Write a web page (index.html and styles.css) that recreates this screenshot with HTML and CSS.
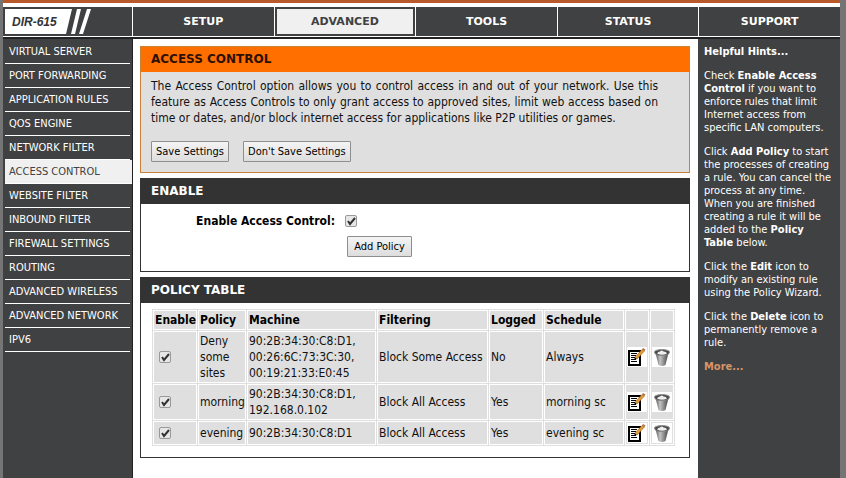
FILE: index.html
```html
<!DOCTYPE html>
<html lang="en">
<head>
    <meta charset="UTF-8">
    <meta name="viewport" content="width=device-width, initial-scale=1.0">
    <title>DIR-615 - Access Control</title>
    <link rel="stylesheet" href="styles.css">
</head>
<body>
    <svg class="sprite" aria-hidden="true">
        <defs>
            <linearGradient id="metal" x1="0" x2="1">
                <stop offset="0" stop-color="#555"/>
                <stop offset=".35" stop-color="#c4c4c4"/>
                <stop offset="1" stop-color="#444"/>
            </linearGradient>
        </defs>
        <symbol id="icon-edit" viewBox="0 0 20 20">
            <rect width="20" height="20" fill="#fff"/>
            <path d="M1 3h13v16H1z" fill="#000"/>
            <path d="M3 5h9v12H3z" fill="#fff"/>
            <path d="M4 6.500h6M4 8.500h5M4 10.500h4M4 12.500h5M4 14.500h6" stroke="#000"/>
            <path d="M7 13l1-3 2 2z" fill="#000"/>
            <path d="M8 10L15 2.500l2.500 1.500-7.500 8z" fill="#e09a3a" stroke="#a5651a" stroke-width=".6"/>
            <path d="M15 2.500l1-1.500 2.500 1.500-1 1.500z" fill="#b5714a"/>
        </symbol>
        <symbol id="icon-delete" viewBox="0 0 20 20">
            <rect width="20" height="20" fill="#fff"/>
            <path d="M3.500 6l3 12q3.500 2 7 0l3-12z" fill="url(#metal)"/>
            <path d="M2.500 5q0-2 7.500-2.500 7.500.500 7.500 2.500 0 3.500-7.500 3.500T2.500 5z" fill="#4a4a4a" stroke="#8a8a8a"/>
            <path d="M5 6.500q1-2 3-2 2-2 3.500 0 3 0 3.500 2-5 2.500-10 0z" fill="#eee"/>
        </symbol>
    </svg>

    <div class="page">
        <div class="banner"></div>

        <div class="topnav">
            <div class="model">
                <svg viewBox="0 0 90 26" width="90" height="26" aria-hidden="true">
                    <path d="M0 0h67l-6 25H0z" fill="#fff"/>
                    <path d="M72 0h4l-6 25h-4zM82 0h4l-8 25h-4z" fill="#fff"/>
                </svg>
                <span>DIR-615</span>
            </div>
            <a href="#">SETUP</a>
            <a href="#" class="active">ADVANCED</a>
            <a href="#">TOOLS</a>
            <a href="#">STATUS</a>
            <a href="#">SUPPORT</a>
        </div>

        <div class="columns">
            <div class="sidenav">
                <a href="#">VIRTUAL SERVER</a>
                <a href="#">PORT FORWARDING</a>
                <a href="#">APPLICATION RULES</a>
                <a href="#">QOS ENGINE</a>
                <a href="#">NETWORK FILTER</a>
                <a href="#" class="active">ACCESS CONTROL</a>
                <a href="#">WEBSITE FILTER</a>
                <a href="#">INBOUND FILTER</a>
                <a href="#">FIREWALL SETTINGS</a>
                <a href="#">ROUTING</a>
                <a href="#">ADVANCED WIRELESS</a>
                <a href="#">ADVANCED NETWORK</a>
                <a href="#">IPV6</a>
            </div>

            <div class="main">
                <div class="box box-intro">
                    <h1>ACCESS CONTROL</h1>
                    <p>The Access Control option allows you to control access in and out of your network. Use this feature as Access Controls to only grant access to approved sites, limit web access based on time or dates, and/or block internet access for applications like P2P utilities or games.</p>
                    <div class="buttons">
                        <button type="button">Save Settings</button>
                        <button type="button">Don't Save Settings</button>
                    </div>
                </div>

                <div class="box box-enable">
                    <h2>ENABLE</h2>
                    <div class="form-row">
                        <label for="enable">Enable Access Control:</label>
                        <input type="checkbox" id="enable" checked>
                    </div>
                    <div class="form-row">
                        <button type="button">Add Policy</button>
                    </div>
                </div>

                <div class="box box-policy">
                    <h2>POLICY TABLE</h2>
                    <table>
                        <colgroup>
                            <col class="c-enable"><col class="c-policy"><col class="c-machine"><col class="c-filter">
                            <col class="c-logged"><col class="c-schedule"><col class="c-icon"><col class="c-icon">
                        </colgroup>
                        <tr>
                            <th>Enable</th>
                            <th>Policy</th>
                            <th>Machine</th>
                            <th>Filtering</th>
                            <th>Logged</th>
                            <th>Schedule</th>
                            <th></th>
                            <th></th>
                        </tr>
                        <tr>
                            <td><input type="checkbox" aria-label="Enable Deny some sites" checked></td>
                            <td>Deny some sites</td>
                            <td>90:2B:34:30:C8:D1, 00:26:6C:73:3C:30, 00:19:21:33:E0:45</td>
                            <td>Block Some Access</td>
                            <td>No</td>
                            <td>Always</td>
                            <td class="icon"><a href="#" aria-label="Edit"><svg><use href="#icon-edit"/></svg></a></td>
                            <td class="icon"><a href="#" aria-label="Delete"><svg><use href="#icon-delete"/></svg></a></td>
                        </tr>
                        <tr>
                            <td><input type="checkbox" aria-label="Enable morning" checked></td>
                            <td>morning</td>
                            <td>90:2B:34:30:C8:D1, 192.168.0.102</td>
                            <td>Block All Access</td>
                            <td>Yes</td>
                            <td>morning sc</td>
                            <td class="icon"><a href="#" aria-label="Edit"><svg><use href="#icon-edit"/></svg></a></td>
                            <td class="icon"><a href="#" aria-label="Delete"><svg><use href="#icon-delete"/></svg></a></td>
                        </tr>
                        <tr>
                            <td><input type="checkbox" aria-label="Enable evening" checked></td>
                            <td>evening</td>
                            <td>90:2B:34:30:C8:D1</td>
                            <td>Block All Access</td>
                            <td>Yes</td>
                            <td>evening sc</td>
                            <td class="icon"><a href="#" aria-label="Edit"><svg><use href="#icon-edit"/></svg></a></td>
                            <td class="icon"><a href="#" aria-label="Delete"><svg><use href="#icon-delete"/></svg></a></td>
                        </tr>
                    </table>
                </div>
            </div>

            <div class="hints">
                <p><strong>Helpful Hints...</strong></p>
                <p>Check <strong>Enable Access Control</strong> if you want to enforce rules that limit Internet access from specific LAN computers.</p>
                <p>Click <strong>Add Policy</strong> to start the processes of creating a rule. You can cancel the process at any time. When you are finished creating a rule it will be added to the <strong>Policy Table</strong> below.</p>
                <p>Click the <strong>Edit</strong> icon to modify an existing rule using the Policy Wizard.</p>
                <p>Click the <strong>Delete</strong> icon to permanently remove a rule.</p>
                <p><a href="#">More...</a></p>
            </div>
        </div>
    </div>
</body>
</html>
```
FILE: styles.css
```css
:root {
    --dark: #404142;
    --header: #333333;
    --orange: #ff6f00;
    --cell: #dfdfdf;
    --light: #f0f0f0;
    --text-font: "DejaVu Sans Condensed", "Open Sans", sans-serif;
    --title-font: "DejaVu Sans", sans-serif;
}

* {
    box-sizing: border-box;
    margin: 0;
    padding: 0;
}

body {
    background: #757575;
    font-family: var(--text-font);
    font-size: 12px;
    line-height: 16px;
    color: #111;
}

a {
    text-decoration: none;
}

.sprite {
    display: block;
    width: 0;
    height: 0;
}

.page {
    display: flex;
    flex-direction: column;
    min-height: 100vh;
    margin: 0 6px 0 3px;
    background: #fff;
}

.banner {
    height: 3px;
    background: #b9592b;
}

/* top navigation */
.topnav {
    display: grid;
    grid-template-columns: 129px repeat(5, 1fr);
    gap: 1px;
    height: 34px;
    padding-top: 4px;
    padding-bottom: 1px;
}

.topnav a,
.model {
    display: flex;
    align-items: center;
    justify-content: center;
    background: var(--dark);
}

.topnav a {
    font-family: var(--title-font);
    font-size: 11px;
    font-weight: bold;
    color: #fff;
}

.topnav a.active {
    border: 2px solid var(--dark);
    background: var(--light);
    color: var(--dark);
}

.model {
    position: relative;
    justify-content: flex-start;
    padding-left: 2px;
}

.model span {
    position: absolute;
    left: 9px;
    font-family: "Liberation Sans", sans-serif;
    font-size: 12px;
    font-weight: bold;
    font-style: italic;
    color: var(--header);
}

.columns {
    display: flex;
    flex: 1;
    border-top: 2px solid #222;
}

/* left menu */
.sidenav {
    width: 130px;
    padding-top: 1px;
    border-right: 1px solid #222;
    background: var(--dark);
}

.sidenav a {
    display: block;
    height: 24px;
    margin: 0 2px;
    padding-left: 4px;
    border-bottom: 1px solid #fff;
    font-size: 11px;
    line-height: 24px;
    white-space: nowrap;
    color: #fff;
}

.sidenav a.active {
    margin-right: 0;
    background: var(--light);
    color: var(--dark);
}

/* content boxes */
.main {
    flex: 1;
    padding: 7px 8px 20px 7px;
}

.box {
    margin-bottom: 5px;
    border: 1px solid var(--header);
    background: #fff;
}

.box h1,
.box h2 {
    height: 25px;
    padding-left: 10px;
    background: var(--header);
    font-family: var(--title-font);
    font-size: 12px;
    line-height: 25px;
    color: #fff;
}

.box-intro {
    border-color: #c98236;
    background: var(--cell);
}

.box-intro h1 {
    background: var(--orange);
    color: #2c1000;
}

.box-intro p {
    padding: 6px 31px 0 10px;
    text-align: justify;
}

.buttons {
    display: flex;
    gap: 14px;
    padding: 15px 10px 10px;
}

button {
    height: 21px;
    padding: 0 4px;
    border: 1px solid #8e8e8e;
    border-radius: 1px;
    background: linear-gradient(#f4f4f4, #dddddd);
    font-family: var(--text-font);
    font-size: 11px;
    color: #000;
}

input[type="checkbox"] {
    display: block;
    width: 12px;
    height: 12px;
    appearance: none;
    border: 1px solid #999;
    border-radius: 2px;
    background: #e6e6e6;
}

input[type="checkbox"]:checked {
    background: #e6e6e6 url("data:image/svg+xml,%3Csvg xmlns='http://www.w3.org/2000/svg' viewBox='0 0 10 10'%3E%3Cpath d='M2 5l2 3 5-6' fill='none' stroke='%23333' stroke-width='2'/%3E%3C/svg%3E") center / 10px 10px no-repeat;
}

.box-enable {
    padding-bottom: 14px;
}

.form-row {
    display: flex;
    align-items: center;
    gap: 10px;
    padding-left: 206px;
}

.form-row label {
    width: 194px;
    margin-left: -206px;
    flex: none;
    text-align: right;
    font-weight: bold;
    color: #000;
}

.form-row button {
    min-width: 65px;
}

.box-enable h2 + .form-row {
    padding: 9px 0 7px 206px;
}

/* policy table */
.box-policy {
    padding-bottom: 11px;
}

table {
    width: 523px;
    margin: 6px 0 0 11px;
    table-layout: fixed;
    border-spacing: 1px;
    background: var(--cell);
}

th,
td {
    padding: 1px;
    border: 1px solid #fff;
    background: var(--cell);
    text-align: left;
    vertical-align: middle;
}

th {
    height: 20px;
    color: #000;
}

td input[type="checkbox"] {
    margin-left: 4px;
}

.c-enable { width: 44px; }
.c-policy { width: 48px; }
.c-machine { width: 129px; }
.c-filter { width: 111px; }
.c-logged { width: 54px; }
.c-schedule { width: 80px; }
.c-icon { width: 24px; }

.icon svg {
    display: block;
    width: 20px;
    height: 20px;
}

/* right column */
.hints {
    width: 142px;
    padding: 6px 6px 0 6px;
    background: var(--dark);
    font-size: 11px;
    line-height: 13px;
    color: #fff;
}

.hints p {
    margin-bottom: 11px;
}

.hints a {
    font-weight: bold;
    color: #d99468;
}
```
